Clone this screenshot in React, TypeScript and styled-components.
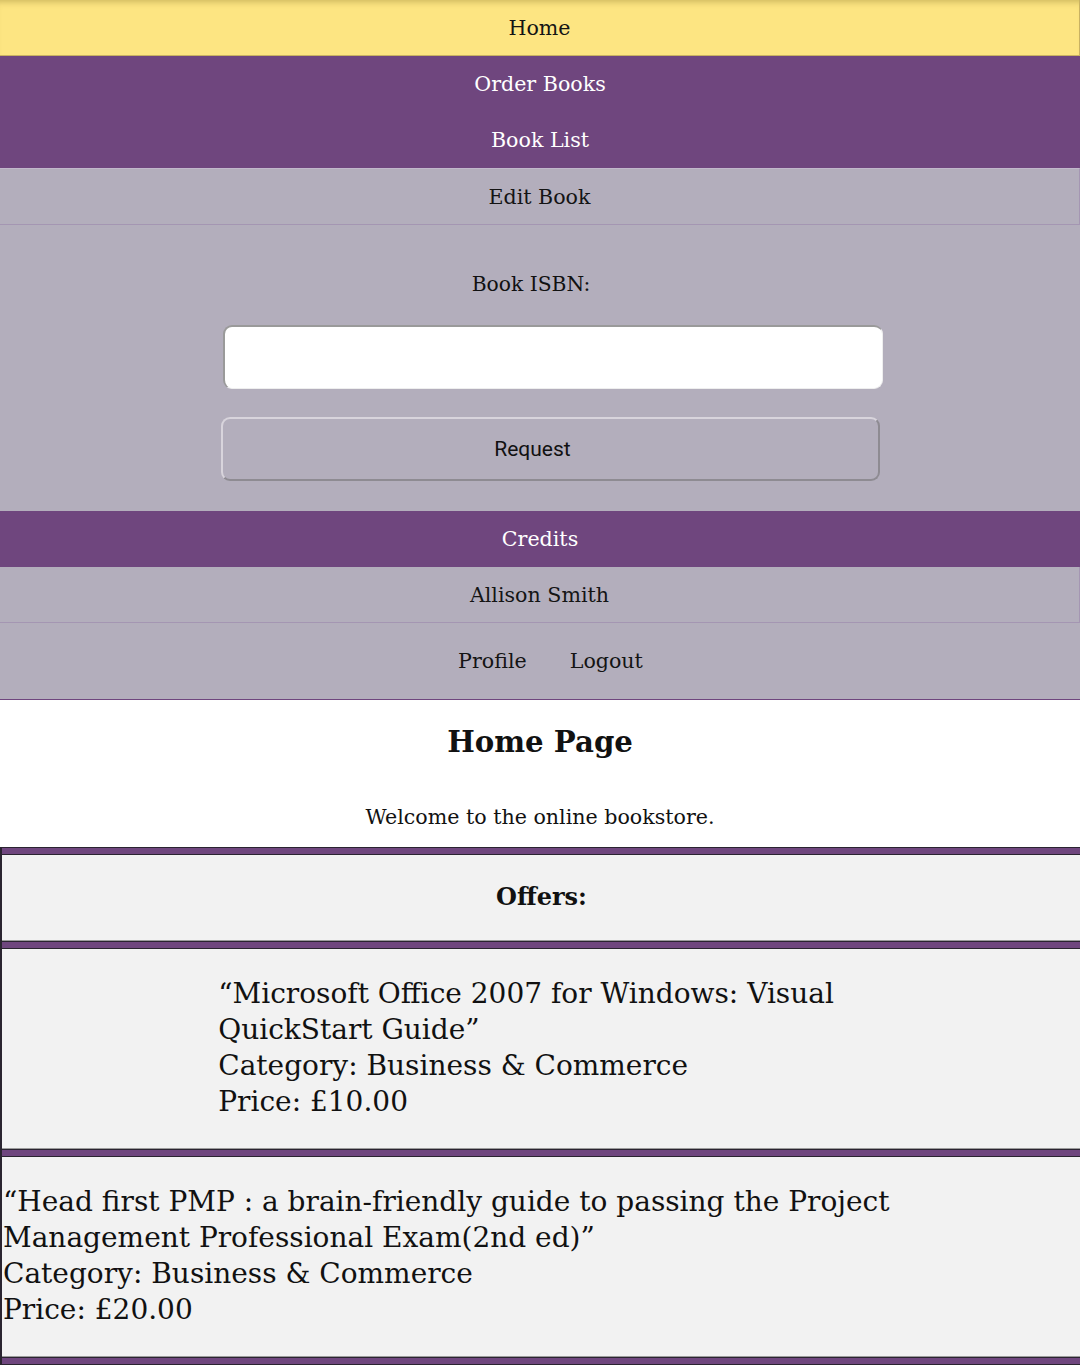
import React from "react";
import styled, { createGlobalStyle, css } from "styled-components";

const GlobalStyle = createGlobalStyle`
  html, body {
    margin: 0;
    padding: 0;
    background: #ffffff;
  }
  body {
    font-family: "DejaVu Serif", "Liberation Serif", serif;
    color: #111111;
  }
  * { box-sizing: border-box; }
`;

const YELLOW = "#fde582";
const PURPLE = "#6f467e";
const GREY = "#b3aebc";

type Variant = "active" | "primary" | "secondary";

const Page = styled.div`
  width: 1080px;
  overflow: hidden;
`;

const Nav = styled.nav`
  display: flex;
  flex-direction: column;
`;

const NavItem = styled.a<{ $variant: Variant; $topLine?: boolean }>`
  display: flex;
  align-items: center;
  justify-content: center;
  height: 56px;
  font-size: 20.6px;
  text-decoration: none;
  cursor: pointer;
  ${({ $variant }) =>
    $variant === "active"
      ? css`
          background: ${YELLOW};
          color: #141414;
          border-bottom: 1px solid #c9b262;
          border-right: 1px solid #c9b262;
          box-shadow: inset 0 7px 6px -5px rgba(120, 100, 30, 0.35);
        `
      : $variant === "primary"
      ? css`
          background: ${PURPLE};
          color: #ffffff;
        `
      : css`
          background: ${GREY};
          color: #141414;
          border-bottom: 1px solid #a496b2;
          border-right: 1px solid #a496b2;
        `}
  ${({ $topLine }) =>
    $topLine &&
    css`
      border-top: 1px solid #c2b8cc;
      height: 57px;
    `}
`;

const FormPanel = styled.form`
  display: flex;
  flex-direction: column;
  align-items: flex-start;
  background: ${GREY};
  padding: 47px 0 30px;
`;

const Label = styled.label`
  align-self: stretch;
  text-align: center;
  font-size: 20.3px;
  line-height: 24px;
  padding-right: 18px;
`;

const TextInput = styled.input`
  margin: 29px 0 0 223px;
  width: 660px;
  height: 64px;
  background: #ffffff;
  border-radius: 9px;
  border-style: solid;
  border-width: 2px 1px 1px 2px;
  border-color: #9a9a9a #eeeeee #eeeeee #9a9a9a;
  outline: none;
  font-size: 20px;
  padding: 0 12px;
`;

const RequestButton = styled.button`
  margin: 28px 0 0 221px;
  width: 659px;
  height: 64px;
  padding: 0 36px 0 0;
  background: transparent;
  border-radius: 9px;
  border-style: solid;
  border-width: 2px;
  border-color: #d8d4dc #8e8b92 #8e8b92 #d8d4dc;
  font-family: Roboto, "Noto Sans", sans-serif;
  font-size: 21px;
  color: #111111;
  cursor: pointer;
`;

const LinksRow = styled.div`
  display: flex;
  align-items: center;
  justify-content: center;
  gap: 43px;
  height: 77px;
  padding-left: 21px;
  background: ${GREY};
  border-bottom: 1px solid ${PURPLE};
`;

const LinkText = styled.a`
  font-size: 20.6px;
  color: #141414;
  text-decoration: none;
  cursor: pointer;
`;

const Main = styled.main`
  display: flex;
  flex-direction: column;
  align-items: stretch;
`;

const Heading = styled.h1`
  margin: 25px 0 0;
  text-align: center;
  font-size: 29.2px;
  line-height: 34px;
  font-weight: bold;
`;

const Welcome = styled.p`
  margin: 46px 0 18px;
  text-align: center;
  font-size: 20.6px;
  line-height: 24px;
`;

const OffersTable = styled.section`
  display: flex;
  flex-direction: column;
  border-left: 2px solid #2a2430;
  width: 1082px;
`;

const Band = styled.div`
  height: 8px;
  background: ${PURPLE};
  border-top: 1px solid #2a2430;
  border-bottom: 1px solid #2a2430;
`;

const Cell = styled.div<{ $kind: "header" | "book" }>`
  background: #f2f2f2;
  border-bottom: 1px solid #9c9c9c;
  border-right: 1px solid #cfcfcf;
  ${({ $kind }) =>
    $kind === "header"
      ? css`
          height: 86px;
          display: flex;
          align-items: center;
          justify-content: center;
          font-size: 24px;
          font-weight: bold;
          padding-bottom: 2px;
        `
      : css`
          height: 200px;
          padding: 27px 2px 0 1px;
          font-size: 28px;
          line-height: 36px;
        `}
`;

const BookInfo = styled.div<{ $narrow?: boolean }>`
  ${({ $narrow }) =>
    $narrow &&
    css`
      width: 60%;
      margin: 0 auto;
    `}
`;

const BookLine = styled.div`
  line-height: 36px;
`;

const books = [
  {
    title: "Microsoft Office 2007 for Windows: Visual QuickStart Guide",
    category: "Business & Commerce",
    price: "£10.00",
    narrow: true,
  },
  {
    title:
      "Head first PMP : a brain-friendly guide to passing the Project Management Professional Exam(2nd ed)",
    category: "Business & Commerce",
    price: "£20.00",
    narrow: false,
  },
];

export default function App() {
  return (
    <Page>
      <GlobalStyle />
      <Nav>
        <NavItem $variant="active">Home</NavItem>
        <NavItem $variant="primary">Order Books</NavItem>
        <NavItem $variant="primary">Book List</NavItem>
        <NavItem $variant="secondary" $topLine>
          Edit Book
        </NavItem>
      </Nav>
      <FormPanel onSubmit={(e) => e.preventDefault()}>
        <Label htmlFor="isbn">Book ISBN:</Label>
        <TextInput id="isbn" type="text" />
        <RequestButton type="submit">Request</RequestButton>
      </FormPanel>
      <Nav>
        <NavItem $variant="primary">Credits</NavItem>
        <NavItem $variant="secondary">Allison Smith</NavItem>
      </Nav>
      <LinksRow>
        <LinkText>Profile</LinkText>
        <LinkText>Logout</LinkText>
      </LinksRow>
      <Main>
        <Heading>Home Page</Heading>
        <Welcome>Welcome to the online bookstore.</Welcome>
        <OffersTable>
          <Band />
          <Cell $kind="header">Offers:</Cell>
          {books.map((b) => (
            <React.Fragment key={b.title}>
              <Band />
              <Cell $kind="book">
                <BookInfo $narrow={b.narrow}>
                  <BookLine>“{b.title}”</BookLine>
                  <BookLine>Category: {b.category}</BookLine>
                  <BookLine>Price: {b.price}</BookLine>
                </BookInfo>
              </Cell>
            </React.Fragment>
          ))}
          <Band />
        </OffersTable>
      </Main>
    </Page>
  );
}
